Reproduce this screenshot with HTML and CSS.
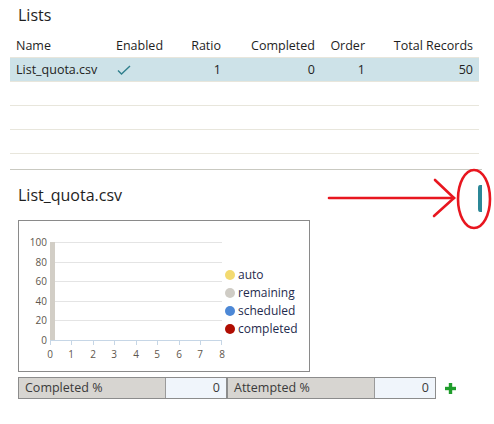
FILE: index.html
```html
<!DOCTYPE html>
<html lang="en">
<head>
    <meta charset="UTF-8">
    <title>Lists</title>
    <link rel="stylesheet" href="styles.css">
</head>
<body>
    <div class="page">
        <!-- Tabla de listas -->
        <section class="lists">
            <h2 class="title">Lists</h2>
            <table class="grid">
                <colgroup>
                    <col class="c-name"><col class="c-enabled"><col class="c-ratio">
                    <col class="c-completed"><col class="c-order"><col class="c-total">
                </colgroup>
                <thead>
                    <tr>
                        <th>Name</th>
                        <th>Enabled</th>
                        <th class="num">Ratio</th>
                        <th class="num">Completed</th>
                        <th class="num">Order</th>
                        <th class="num">Total Records</th>
                    </tr>
                </thead>
                <tbody>
                    <tr class="selected">
                        <td>List_quota.csv</td>
                        <td>
                            <svg class="check" width="14" height="10" viewBox="0 0 14 10">
                                <path d="M1 5.5 L4.5 9 L13 1" fill="none" stroke="#2f7f8c" stroke-width="1.4"/>
                            </svg>
                        </td>
                        <td class="num">1</td>
                        <td class="num">0</td>
                        <td class="num">1</td>
                        <td class="num">50</td>
                    </tr>
                    <tr><td></td><td></td><td></td><td></td><td></td><td></td></tr>
                    <tr><td></td><td></td><td></td><td></td><td></td><td></td></tr>
                    <tr><td></td><td></td><td></td><td></td><td></td><td></td></tr>
                </tbody>
            </table>
        </section>

        <!-- Detalle de la lista -->
        <section class="detail">
            <h2 class="title">List_quota.csv</h2>

            <div class="chart">
                <svg width="290" height="150" viewBox="0 0 290 150">
                    <g stroke="#e4e4e4" stroke-width="1">
                        <line x1="36" y1="21.5" x2="203" y2="21.5"/>
                        <line x1="36" y1="41.5" x2="203" y2="41.5"/>
                        <line x1="36" y1="60.5" x2="203" y2="60.5"/>
                        <line x1="36" y1="80.5" x2="203" y2="80.5"/>
                        <line x1="36" y1="99.5" x2="203" y2="99.5"/>
                    </g>
                    <rect x="31" y="21" width="5" height="98" fill="#d2cec6"/>
                    <g stroke="#c6d6e6" stroke-width="1">
                        <line x1="31" y1="119.5" x2="203" y2="119.5"/>
                        <line x1="31.5" y1="119" x2="31.5" y2="124"/>
                        <line x1="52.5" y1="119" x2="52.5" y2="124"/>
                        <line x1="74.5" y1="119" x2="74.5" y2="124"/>
                        <line x1="95.5" y1="119" x2="95.5" y2="124"/>
                        <line x1="117.5" y1="119" x2="117.5" y2="124"/>
                        <line x1="138.5" y1="119" x2="138.5" y2="124"/>
                        <line x1="160.5" y1="119" x2="160.5" y2="124"/>
                        <line x1="181.5" y1="119" x2="181.5" y2="124"/>
                        <line x1="202.5" y1="119" x2="202.5" y2="124"/>
                    </g>
                    <g class="axis" text-anchor="end">
                        <text x="28" y="25">100</text>
                        <text x="28" y="45">80</text>
                        <text x="28" y="64">60</text>
                        <text x="28" y="84">40</text>
                        <text x="28" y="103">20</text>
                        <text x="28" y="123">0</text>
                    </g>
                    <g class="axis" text-anchor="middle">
                        <text x="31" y="137">0</text>
                        <text x="52" y="137">1</text>
                        <text x="74" y="137">2</text>
                        <text x="95" y="137">3</text>
                        <text x="117" y="137">4</text>
                        <text x="138" y="137">5</text>
                        <text x="160" y="137">6</text>
                        <text x="181" y="137">7</text>
                        <text x="203" y="137">8</text>
                    </g>
                    <g class="legend">
                        <circle cx="211" cy="54" r="5" fill="#f3da70"/>
                        <text x="219" y="58">auto</text>
                        <circle cx="211" cy="72" r="5" fill="#cfccc5"/>
                        <text x="219" y="76">remaining</text>
                        <circle cx="211" cy="90" r="5" fill="#4d88d6"/>
                        <text x="219" y="94">scheduled</text>
                        <circle cx="211" cy="108" r="5" fill="#b00d02"/>
                        <text x="219" y="112">completed</text>
                    </g>
                </svg>
            </div>

            <div class="stats">
                <div class="stat">
                    <span class="stat-label">Completed %</span>
                    <span class="stat-value">0</span>
                </div>
                <div class="stat">
                    <span class="stat-label">Attempted %</span>
                    <span class="stat-value">0</span>
                </div>
                <svg class="add" width="11" height="11" viewBox="0 0 11 11">
                    <rect x="3.8" y="0" width="3.4" height="11" fill="#1f9d2c"/>
                    <rect x="0" y="3.8" width="11" height="3.4" fill="#1f9d2c"/>
                </svg>
            </div>
        </section>

        <!-- Flecha y marca roja -->
        <svg class="annotation" width="174" height="72" viewBox="0 0 174 72">
            <path d="M162 20 L160 20 Q158 20 158 23 L158 44 Q158 47 160 47 L162 47 Z" fill="#2b8797"/>
            <g fill="none" stroke="#e8161f" stroke-width="2.6" stroke-linecap="round">
                <line x1="9" y1="33" x2="134" y2="33"/>
                <polyline points="115,15 134,33 114,51"/>
                <ellipse cx="154" cy="34" rx="16" ry="29"/>
            </g>
        </svg>
    </div>
</body>
</html>
```

FILE: styles.css
```css
body {
    margin: 0;
    padding: 0;
    background: #ffffff;
    font-family: 'Open Sans', sans-serif;
    color: #222222;
}

.page {
    position: relative;
    width: 494px;
    height: 424px;
    overflow: hidden;
}

.title {
    margin: 0;
    font-size: 16px;
    font-weight: normal;
    color: #1e1e1e;
    line-height: 22px;
}

/* ===== LISTAS ===== */
.lists {
    margin: 0 12px 0 10px;
    padding-top: 4px;
    padding-bottom: 15px;
    border-bottom: 1px solid #c9c9c1;
}

.lists .title {
    padding-left: 8px;
    margin-bottom: 8px;
}

.grid {
    width: 469px;
    border-collapse: separate;
    border-spacing: 0;
    font-size: 12.5px;
    table-layout: fixed;
}

.c-name { width: 100px; }
.c-enabled { width: 60px; }
.c-ratio { width: 57px; }
.c-completed { width: 94px; }
.c-order { width: 50px; }
.c-total { width: 108px; }

.grid th,
.grid td {
    height: 23px;
    padding: 0 6px;
    border-bottom: 1px solid #e8e6dc;
    text-align: left;
    white-space: nowrap;
}

.grid th {
    font-weight: normal;
    color: #1e1e1e;
}

.grid .num {
    text-align: right;
}

.selected td {
    background: #cde2e8;
}

.check {
    display: block;
    margin-left: 1px;
}

/* ===== DETALLE ===== */
.detail {
    padding: 14px 0 0 18px;
}

.detail .title {
    margin-bottom: 14px;
}

.chart {
    width: 290px;
    height: 150px;
    border: 1px solid #8a8a8a;
}

.chart svg {
    display: block;
}

.axis text {
    font-size: 10px;
    fill: #5e564c;
}

.legend text {
    font-size: 12px;
    fill: #1f2b4e;
}

.stats {
    display: flex;
    align-items: center;
    margin-top: 5px;
}

.stat {
    display: flex;
    height: 20px;
    border: 1.5px solid #8c8c8c;
    font-size: 12.5px;
}

.stat-label {
    width: 140px;
    padding-left: 6px;
    line-height: 20px;
    background: #d7d5d1;
    color: #3a3a3a;
    border-right: 1px solid #9a9a9a;
}

.stat-value {
    width: 54px;
    padding-right: 6px;
    line-height: 20px;
    text-align: right;
    background: #f0f5fb;
    color: #3a3a3a;
}

.add {
    margin-left: 9px;
}

.annotation {
    position: absolute;
    left: 320px;
    top: 165px;
}
```
